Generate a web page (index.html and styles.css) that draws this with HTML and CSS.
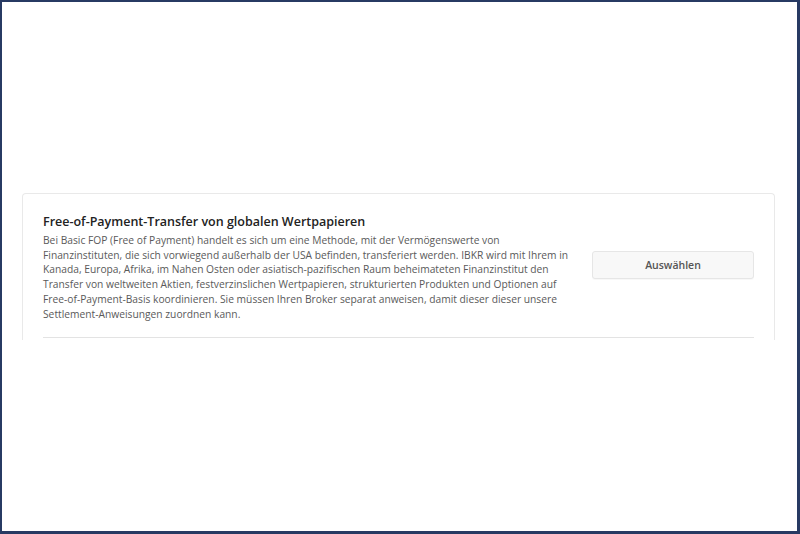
FILE: index.html
```html
<!DOCTYPE html>
<html lang="de">
<head>
<meta charset="utf-8">
<title>Free-of-Payment-Transfer</title>
<link rel="stylesheet" href="styles.css">
</head>
<body>
<div class="frame">
  <section class="card">
    <div class="row">
      <div class="info">
        <h2 class="title">Free-of-Payment-Transfer von globalen Wertpapieren</h2>
        <p class="desc">Bei Basic FOP (Free of Payment) handelt es sich um eine Methode, mit der Vermögenswerte von Finanzinstituten, die sich vorwiegend außerhalb der USA befinden, transferiert werden. IBKR wird mit Ihrem in Kanada, Europa, Afrika, im Nahen Osten oder asiatisch-pazifischen Raum beheimateten Finanzinstitut den Transfer von weltweiten Aktien, festverzinslichen Wertpapieren, strukturierten Produkten und Optionen auf Free-of-Payment-Basis koordinieren. Sie müssen Ihren Broker separat anweisen, damit dieser dieser unsere Settlement-Anweisungen zuordnen kann.</p>
      </div>
      <div class="action">
        <button class="select-btn" type="button">Auswählen</button>
      </div>
    </div>
    <div class="divider"></div>
  </section>
</div>
</body>
</html>
```
FILE: styles.css
```css
* { box-sizing: border-box; }
html, body { margin: 0; padding: 0; background: #fff; }
body { font-family: "Open Sans", Lato, "Liberation Sans", sans-serif; }

.frame {
  width: 800px;
  height: 534px;
  border-style: solid;
  border-color: #273a63;
  border-width: 2px 3px 3px 2px;
  padding: 191px 22px 0 20px;
  overflow: hidden;
  background: #fff;
}

.card {
  border: 1px solid #e9e9e9;
  border-bottom: none;
  border-radius: 4px 4px 0 0;
  padding: 20px 20px 2px 20px;
}

.row {
  display: flex;
  gap: 22px;
}

.info {
  flex: 0 0 527px;
}

.title {
  margin: 0;
  font-size: 12.5px;
  line-height: 16px;
  font-weight: 600;
  color: #222;
}

.desc {
  margin: 3px 0 0;
  font-size: 10.25px;
  line-height: 14.7px;
  color: #5a5a5a;
}

.action {
  flex: 1;
  padding-top: 37px;
}

.select-btn {
  display: block;
  width: 100%;
  height: 28px;
  border: 1px solid #e6e6e6;
  border-radius: 3px;
  background: #f8f8f8;
  font-family: inherit;
  font-size: 10.5px;
  font-weight: 600;
  color: #555;
  box-shadow: 0 1px 1px rgba(0,0,0,0.03);
}

.divider {
  height: 1px;
  background: #e3e3e3;
  margin-top: 16px;
}
```
